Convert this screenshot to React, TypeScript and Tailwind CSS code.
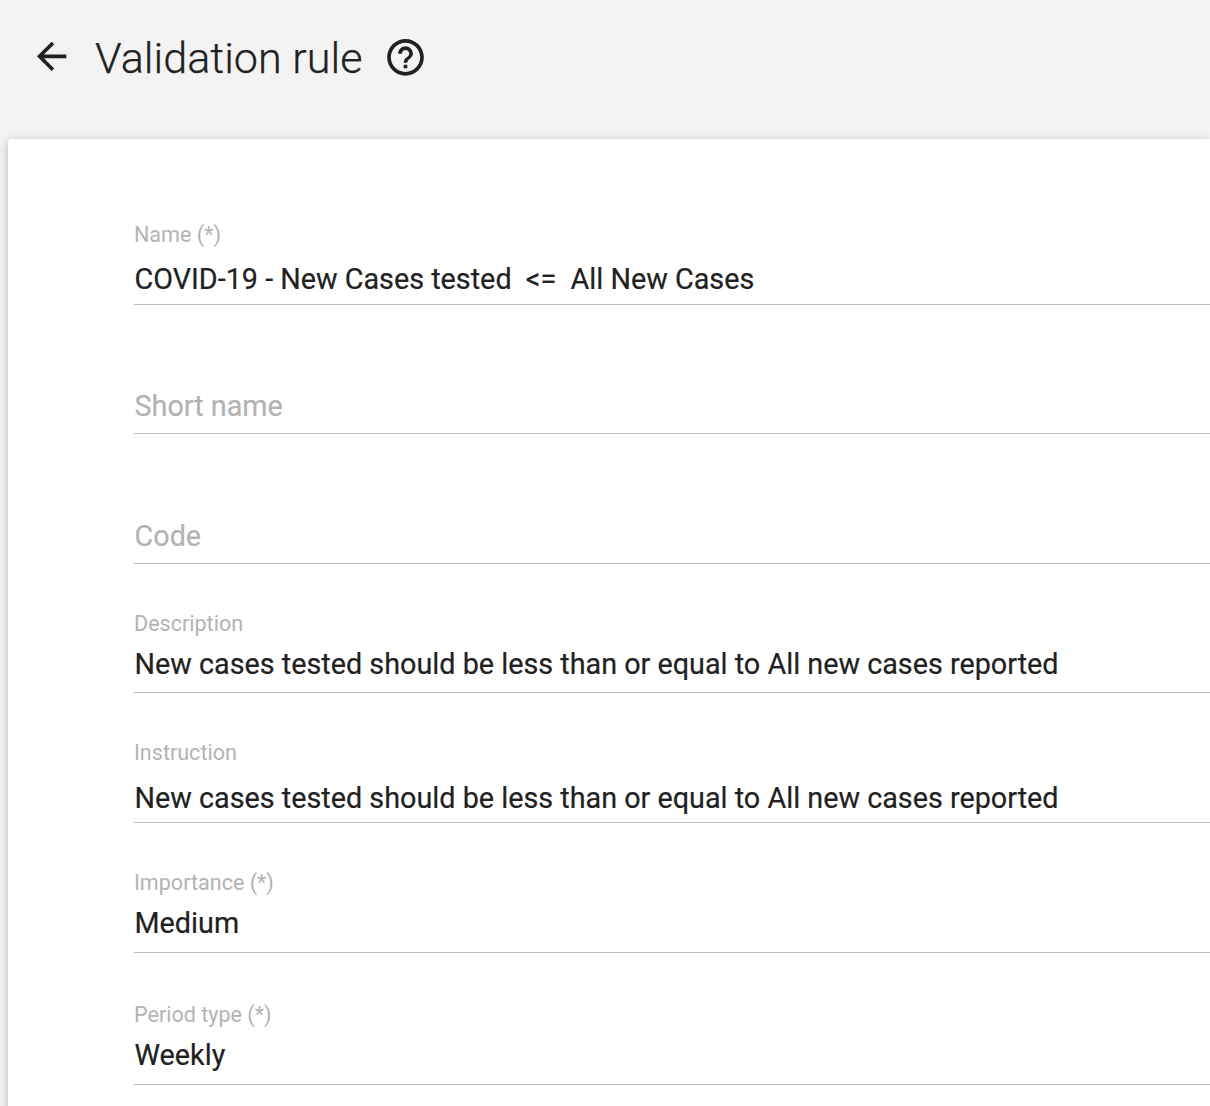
import React from "react";

type FieldProps = { label?: string; value?: string; placeholder?: string; box: string; labelPos?: string; valuePos: string };

function Field({ label, value, placeholder, box, labelPos, valuePos }: FieldProps) {
  return (
    <div className={`flex flex-col border-b border-[#bdbdbd] whitespace-pre ${box}`}>
      {label && <span className={`text-[21.55px] leading-[26px] text-[#b3b3b3] ${labelPos}`}>{label}</span>}
      <span className={`pl-[0.5px] text-[28.78px] leading-[34px] [-webkit-text-stroke:0.2px_currentColor] ${value ? "text-[#212121]" : "text-[#b3b3b3]"} ${valuePos}`}>{value ?? placeholder}</span>
    </div>
  );
}

export default function App() {
  return (
    <div className="h-[1106px] w-full overflow-hidden bg-[#f3f3f3] font-['Roboto',sans-serif]">
      <header className="flex h-[139px] items-start pt-[32px] pl-[30px]">
        <svg className="mt-[2px] size-[44px] shrink-0" viewBox="0.2 -0.2 24 24" fill="#212121">
          <path d="M20 11H7.830l5.590-5.590L12 4l-8 8 8 8 1.410-1.410L7.830 13H20v-2z" />
        </svg>
        <h1 className="mt-px ml-[21px] w-[268px] text-[43.15px] leading-[52px] font-light whitespace-nowrap text-[#212121] [-webkit-text-stroke:0.25px_currentColor]">Validation rule</h1>
        <svg className="ml-[21px] mt-[3px] size-[44px] shrink-0" viewBox="0.27 -0.16 24 24" fill="#212121">
          <path d="M11 18h2v-2h-2v2zm1-16C6.480 2 2 6.480 2 12s4.480 10 10 10 10-4.480 10-10S17.520 2 12 2zm0 18c-4.410 0-8-3.590-8-8s3.590-8 8-8 8 3.590 8 8-3.590 8-8 8zm0-14c-2.210 0-4 1.790-4 4h2c0-1.100.900-2 2-2s2 .900 2 2c0 2-3 1.750-3 5h2c0-2.250 3-2.500 3-5 0-2.210-1.790-4-4-4z" />
        </svg>
      </header>
      <main className="ml-[8px] h-[980px] rounded-tl-[4px] bg-white pt-[36px] pl-[126px] shadow-[0_2px_12px_rgba(0,0,0,0.12),0_2px_8px_rgba(0,0,0,0.12)]">
        <Field label="Name (*)" value="COVID-19 - New Cases tested  <=  All New Cases" box="h-[130px]" labelPos="mt-[47px]" valuePos="mt-[14px]" />
        <Field placeholder="Short name" box="h-[129px]" valuePos="mt-[84px]" />
        <Field placeholder="Code" box="h-[130px]" valuePos="mt-[85px]" />
        <Field label="Description" value="New cases tested should be less than or equal to All new cases reported" box="h-[129px]" labelPos="mt-[47px]" valuePos="mt-[10px]" />
        <Field label="Instruction" value="New cases tested should be less than or equal to All new cases reported" box="h-[130px]" labelPos="mt-[47px]" valuePos="mt-[15px]" />
        <Field label="Importance (*)" value="Medium" box="h-[130px]" labelPos="mt-[47px]" valuePos="mt-[10px]" />
        <Field label="Period type (*)" value="Weekly" box="h-[132px]" labelPos="mt-[49px]" valuePos="mt-[10px]" />
      </main>
    </div>
  );
}
